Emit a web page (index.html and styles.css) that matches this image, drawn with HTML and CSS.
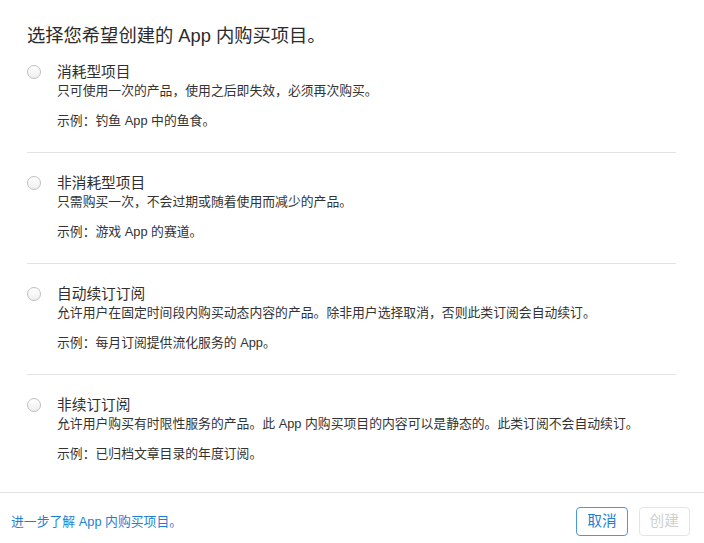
FILE: index.html
```html
<!DOCTYPE html>
<html lang="zh-CN">
<head>
<meta charset="utf-8">
<title>选择 App 内购买项目</title>
<link rel="stylesheet" href="styles.css">
</head>
<body>
<div class="dialog">
  <main class="content">
    <h1 class="heading">选择您希望创建的 App 内购买项目。</h1>
    <ul class="options">
      <li class="option">
        <span class="radio"></span>
        <div class="option-text">
          <div class="option-title">消耗型项目</div>
          <div class="option-desc">只可使用一次的产品，使用之后即失效，必须再次购买。</div>
          <div class="option-example"><span class="label">示例：</span>钓鱼 App 中的鱼食。</div>
        </div>
      </li>
      <li class="option">
        <span class="radio"></span>
        <div class="option-text">
          <div class="option-title">非消耗型项目</div>
          <div class="option-desc">只需购买一次，不会过期或随着使用而减少的产品。</div>
          <div class="option-example"><span class="label">示例：</span>游戏 App 的赛道。</div>
        </div>
      </li>
      <li class="option">
        <span class="radio"></span>
        <div class="option-text">
          <div class="option-title">自动续订订阅</div>
          <div class="option-desc">允许用户在固定时间段内购买动态内容的产品。除非用户选择取消，否则此类订阅会自动续订。</div>
          <div class="option-example"><span class="label">示例：</span>每月订阅提供流化服务的 App。</div>
        </div>
      </li>
      <li class="option">
        <span class="radio"></span>
        <div class="option-text">
          <div class="option-title">非续订订阅</div>
          <div class="option-desc">允许用户购买有时限性服务的产品。此 App 内购买项目的内容可以是静态的。此类订阅不会自动续订。</div>
          <div class="option-example"><span class="label">示例：</span>已归档文章目录的年度订阅。</div>
        </div>
      </li>
    </ul>
  </main>
  <footer class="footer">
    <a class="learn-more" href="#">进一步了解 App 内购买项目。</a>
    <div class="actions">
      <button class="btn btn-cancel" type="button">取消</button>
      <button class="btn btn-create" type="button" disabled>创建</button>
    </div>
  </footer>
</div>
</body>
</html>
```

FILE: styles.css
```css
* {
  box-sizing: border-box;
}

html, body {
  margin: 0;
  padding: 0;
  background: #ffffff;
}

body {
  font-family: "Liberation Sans", "Noto Sans CJK SC", sans-serif;
  color: #333333;
}

.dialog {
  height: 543px;
  display: flex;
  flex-direction: column;
  overflow: hidden;
}

.content {
  flex: 1;
  padding: 24px 28px 0 27px;
}

.heading {
  margin: 0;
  font-size: 18.3px;
  line-height: 24px;
  font-weight: 400;
  color: #2b2b2b;
}

.options {
  list-style: none;
  margin: 0;
  padding: 0;
}

.option {
  display: flex;
  align-items: flex-start;
  gap: 16px;
  padding: 20px 0 22px;
  border-bottom: 1px solid #e3e3e3;
}

.option:first-child {
  padding-top: 14px;
}

.option:last-child {
  border-bottom: none;
}

.radio {
  flex: none;
  width: 14px;
  height: 14px;
  margin-top: 3px;
  border-radius: 50%;
  border: 1px solid #bfbfbf;
  background: linear-gradient(#ffffff, #efefef);
}

.option-text {
  display: flex;
  flex-direction: column;
}

.option-title {
  font-size: 14.7px;
  line-height: 20px;
  color: #2f2f2f;
}

.option-desc {
  font-size: 12.83px;
  line-height: 18px;
  color: #333333;
}

.option-example {
  margin-top: 12px;
  font-size: 12.83px;
  line-height: 18px;
  color: #333333;
}

.label {
  font-weight: 400;
}

.footer {
  flex: none;
  height: 51px;
  border-top: 1px solid #e3e3e3;
  display: flex;
  justify-content: space-between;
  align-items: flex-start;
  padding: 14px 14px 0 11px;
}

.learn-more {
  font-size: 12.83px;
  line-height: 29px;
  color: #1d7fd6;
  text-decoration: none;
}

.actions {
  display: flex;
  gap: 11px;
}

.btn {
  font-family: inherit;
  font-size: 14.7px;
  line-height: 27px;
  height: 29px;
  padding: 0 10px;
  border-radius: 4px;
  background: #ffffff;
  margin: 0;
}

.btn-cancel {
  border: 1px solid #4a98df;
  color: #1d7fd6;
}

.btn-create {
  border: 1px solid #e4e4e4;
  color: #cfcfcf;
}
```
